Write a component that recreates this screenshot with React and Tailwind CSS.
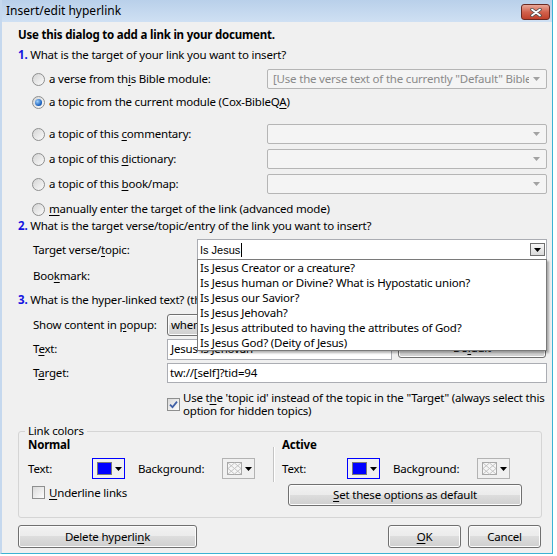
import React from 'react';

const SUGGESTIONS = [
  'Is Jesus Creator or a creature?',
  'Is Jesus human or Divine? What is Hypostatic union?',
  'Is Jesus our Savior?',
  'Is Jesus Jehovah?',
  'Is Jesus attributed to having the attributes of God?',
  'Is Jesus God? (Deity of Jesus)',
];

// mnemonic underline
const U = ({ children }) => <span className="underline decoration-1 underline-offset-[2px]">{children}</span>;

const Arrow = ({ color = '#000' }) => (
  <svg width="7" height="4" viewBox="0 0 7 4">
    <path d="M0 0h7L3.5 4z" fill={color} />
  </svg>
);

const Radio = ({ checked }) => (
  <span className="flex h-[13px] w-[13px] shrink-0 items-center justify-center rounded-full border border-[#8e8f8f] bg-[linear-gradient(135deg,#d4d4d4,#fbfbfb)]">
    {checked && <span className="h-[7px] w-[7px] rounded-full bg-[radial-gradient(circle_at_35%_35%,#9fd0fb,#1b62bf_65%,#0c3b86)]" />}
  </span>
);

const Check = ({ checked }) => (
  <span className="flex h-[13px] w-[13px] shrink-0 items-center justify-center border border-[#8e8f8f] bg-[linear-gradient(135deg,#dadada,#fdfdfd)]">
    {checked && (
      <svg width="9" height="9" viewBox="0 0 9 9">
        <path d="M1 4.6L3.5 7.2L8 1.6" fill="none" stroke="#3f5fa6" strokeWidth="1.8" />
      </svg>
    )}
  </span>
);

const DisabledCombo = ({ text }) => (
  <div className="flex h-[20px] w-[280px] shrink-0 items-center overflow-hidden rounded-[2px] border border-[#b5b5b5] bg-[#f4f4f4] pl-[5px] pr-[6px]">
    <span className="flex-1 overflow-hidden whitespace-nowrap text-[#8a8a8a]">{text}</span>
    <span className="ml-[4px] flex"><Arrow color="#a2a2a2" /></span>
  </div>
);

const Button = ({ className, children }) => (
  <div className={`flex items-center justify-center rounded-[3px] border border-[#707070] bg-[linear-gradient(to_bottom,#f2f2f2_0%,#ebebeb_50%,#dddddd_50%,#cfcfcf_100%)] shadow-[inset_0_0_0_1px_#fcfcfc] ${className}`}>
    {children}
  </div>
);

const TransparentSwatch = () => (
  <svg width="15" height="13" viewBox="0 0 15 13">
    <rect x="0.5" y="0.5" width="14" height="12" fill="#f6f6f6" stroke="#a8a8a8" />
    <path d="M1 1L14 12M14 1L1 12M1 6.5L7.5 1L14 6.5L7.5 12Z" fill="none" stroke="#c4c4c4" strokeWidth="1" />
  </svg>
);

const ColorButton = ({ focused, transparent }) => (
  <div className={`flex h-[21px] w-[33px] shrink-0 items-center gap-[3px] border pl-[4px] ${focused ? 'border-[#0000ff]' : 'border-[#b3b3b3]'}`}>
    {transparent ? <TransparentSwatch /> : <span className="h-[13px] w-[15px] border border-[#7a7a7a] bg-[#0000ff]" />}
    <Arrow />
  </div>
);

const RadioRow = ({ checked, label, combo, className }) => (
  <div className={`flex items-center pl-[14px] ${className}`}>
    <Radio checked={checked} />
    <span className="ml-[4px] w-[218px] shrink-0 whitespace-nowrap">{label}</span>
    {combo}
  </div>
);

export default function App() {
  return (
    <div className="h-[556px] w-[557px] overflow-hidden bg-white font-['Noto_Sans',sans-serif] text-[11.5px] leading-[16px] tracking-[-0.2px] text-black">
      <div className="flex h-[554px] w-[553px] flex-col border-b border-l-2 border-r border-b-[#3cb3d4] border-l-[#c5d8ee] border-r-[#3cb3d4] bg-[#f0f0f0]">
        {/* Title bar */}
        <div className="flex h-[22px] shrink-0 bg-[linear-gradient(to_bottom,#b9d0ea,#cfe0f3)] pl-[4px] pr-[2px] text-[12px] tracking-normal">
          <span className="self-center">Insert/edit hyperlink</span>
          <div className="ml-auto mt-[4px] flex h-[16px] w-[29px] items-center justify-center rounded-[3px] border border-[#6b2a22] bg-[linear-gradient(to_bottom,#e9a899,#d2624d_50%,#c0412b)]">
            <svg width="12" height="9" viewBox="0 0 12 9">
              <path d="M2 1.5L10 7.5M10 1.5L2 7.5" stroke="#4a4a4a" strokeWidth="3.4" strokeLinecap="round" />
              <path d="M2 1.5L10 7.5M10 1.5L2 7.5" stroke="#ffffff" strokeWidth="1.8" strokeLinecap="round" />
            </svg>
          </div>
        </div>

        {/* Content */}
        <div className="flex flex-col pl-[16px] pr-[5px]">
          <div className="mt-[5px] h-[16px] font-bold">Use this dialog to add a link in your document.</div>
          <div className="mt-[4px] h-[16px] whitespace-nowrap">
            <span className="font-bold text-[#1414e0]">1.</span> What is the target of your link you want to insert?
          </div>

          <RadioRow
            className="mt-[6px] h-[20px]"
            label={<>a verse from th<U>i</U>s Bible module:</>}
            combo={<DisabledCombo text={'[Use the verse text of the currently "Default" Bible module]'} />}
          />
          <RadioRow className="mt-[5px] h-[16px]" checked label={<>a topic from the current module (Cox-BibleQ<U>A</U>)</>} />
          <RadioRow className="mt-[14px] h-[20px]" label={<>a topic of this <U>c</U>ommentary:</>} combo={<DisabledCombo text="" />} />
          <RadioRow className="mt-[5px] h-[20px]" label={<>a topic of this <U>d</U>ictionary:</>} combo={<DisabledCombo text="" />} />
          <RadioRow className="mt-[5px] h-[20px]" label={<>a topic of this <U>b</U>ook/map:</>} combo={<DisabledCombo text="" />} />
          <RadioRow className="mt-[7px] h-[16px]" label={<><U>m</U>anually enter the target of the link (advanced mode)</>} />

          <div className="mt-[1px] h-[16px] whitespace-nowrap">
            <span className="font-bold text-[#1414e0]">2.</span> What is the target verse/topic/entry of the link you want to insert?
          </div>

          {/* Target verse/topic with open suggestion list */}
          <div className="mt-[5px] flex h-[21px] items-center pl-[15px]">
            <span className="w-[164px] shrink-0">Target verse/<U>t</U>opic:</span>
            <div className="relative flex h-full flex-1 items-center border border-[#abadb3] bg-white pl-[2px] pr-[1px]">
              <span className="font-['Liberation_Sans',sans-serif] text-[11px] tracking-normal">Is Jesus</span>
              <span className="ml-px h-[14px] w-px bg-black" />
              <span className="ml-auto flex h-[13px] w-[15px] items-center justify-center border border-[#707070] bg-[linear-gradient(to_bottom,#f7f7f7,#dadada)]">
                <Arrow />
              </span>
              <div className="absolute left-[-1px] right-[-1px] top-full z-10 border border-[#7a7a7a] bg-white shadow-[2px_2px_2px_rgba(0,0,0,0.3)]">
                {SUGGESTIONS.map((s) => (
                  <div key={s} className="h-[15px] whitespace-nowrap pl-[2px] leading-[15px]">{s}</div>
                ))}
              </div>
            </div>
          </div>

          <div className="mt-[6px] flex h-[20px] items-center pl-[15px]">
            <span className="w-[164px] shrink-0">Boo<U>k</U>mark:</span>
            <div className="h-full flex-1 border border-[#abadb3] bg-white" />
          </div>

          <div className="mt-[6px] h-[16px] whitespace-nowrap">
            <span className="font-bold text-[#1414e0]">3.</span> What is the hyper-linked text? (the text displayed in the document)
          </div>

          <div className="mt-[6px] flex h-[22px] items-center pl-[15px]">
            <span className="w-[134px] shrink-0">Show content in <U>p</U>opup:</span>
            <Button className="h-[22px] w-[225px] !justify-start pl-[3px]">when mouse hovers the link</Button>
          </div>

          <div className="mt-[2px] flex h-[22px] items-center pl-[15px]">
            <span className="w-[134px] shrink-0">T<U>e</U>xt:</span>
            <div className="flex h-[21px] w-[225px] items-center border border-[#abadb3] bg-white pl-[3px]">Jesus is Jehovah</div>
            <Button className="ml-[6px] h-[20px] w-[148px] self-start">
              De<U>f</U>ault
            </Button>
          </div>

          <div className="mt-[3px] flex h-[20px] items-center pl-[15px]">
            <span className="w-[134px] shrink-0">T<U>a</U>rget:</span>
            <div className="flex h-full flex-1 items-center border border-[#abadb3] bg-white pl-[2px]">tw://[self]?tid=94</div>
          </div>

          <div className="mt-[8px] flex items-center pl-[149px]">
            <Check checked />
            <span className="ml-[3px] whitespace-nowrap leading-[13px]">
              Use t<U>h</U>e 'topic id' instead of the topic in the "Target" (always select this
              <br />
              option for hidden topics)
            </span>
          </div>

          {/* Link colors group */}
          <div className="relative mr-[5px] mt-[14px] flex h-[87px] rounded-[3px] border border-[#d5d5d5]">
            <span className="absolute left-[6px] top-[-9px] bg-[#f0f0f0] px-[3px]">Link colors</span>

            <div className="flex w-[254px] shrink-0 flex-col pl-[9px]">
              <div className="mt-[6px] h-[14px] font-bold leading-[14px]">Normal</div>
              <div className="mt-[6px] flex h-[21px] items-center">
                <span className="w-[64px] shrink-0">Text:</span>
                <ColorButton focused />
                <span className="ml-[13px] w-[84px] shrink-0">Background:</span>
                <ColorButton transparent />
              </div>
              <div className="mt-[7px] flex h-[13px] items-center pl-[4px]">
                <Check />
                <span className="ml-[4px]"><U>U</U>nderline links</span>
              </div>
            </div>

            <div className="mt-[15px] h-[35px] w-[2px] shrink-0 border-l border-r border-l-[#c4c4c4] border-r-white" />

            <div className="flex flex-col pl-[7px]">
              <div className="mt-[6px] h-[14px] font-bold leading-[14px]">Active</div>
              <div className="mt-[6px] flex h-[21px] items-center">
                <span className="w-[65px] shrink-0">Text:</span>
                <ColorButton focused />
                <span className="ml-[13px] w-[84px] shrink-0">Background:</span>
                <ColorButton transparent />
              </div>
              <Button className="ml-[6px] mt-[5px] h-[22px] w-[234px]">
                <span><U>S</U>et these options as default</span>
              </Button>
            </div>
          </div>

          {/* Bottom buttons */}
          <div className="mr-[6px] mt-[7px] flex h-[23px]">
            <Button className="h-full w-[179px]">Delete hyperli<U>n</U>k</Button>
            <Button className="ml-auto h-full w-[73px]"><U>O</U>K</Button>
            <Button className="ml-[7px] h-full w-[73px]">Cancel</Button>
          </div>
        </div>
      </div>
    </div>
  );
}
